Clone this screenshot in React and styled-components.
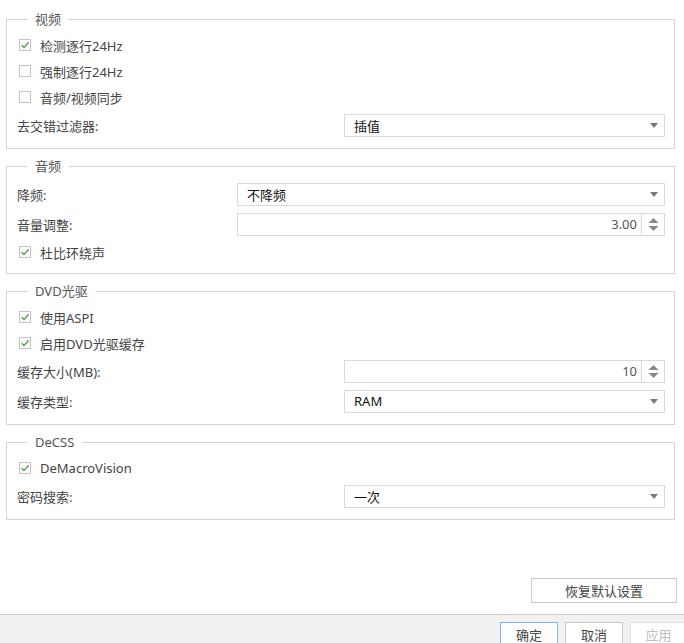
import React from 'react';
import styled, { createGlobalStyle } from 'styled-components';

const GlobalStyle = createGlobalStyle`
  html, body {
    margin: 0;
    padding: 0;
    background: #fff;
  }
  body {
    font-family: "Noto Sans", "Noto Sans CJK SC", sans-serif;
    font-size: 13px;
    color: #444;
  }
  * {
    box-sizing: border-box;
  }
`;

const Window = styled.div`
  width: 684px;
  height: 643px;
  display: flex;
  flex-direction: column;
  overflow: hidden;
`;

const Content = styled.div`
  flex: 1;
  min-height: 0;
  display: flex;
  flex-direction: column;
  gap: 8px;
  padding: 10px 9px 11px 6px;
  background: #fff;
`;

const Group = styled.fieldset`
  margin: 0;
  padding: 4px 9px 8px 10px;
  border: 1px solid #d4d4d4;
  min-width: 0;
`;

const Legend = styled.legend`
  margin-left: 10px;
  padding: 0 8px;
  height: 18px;
  line-height: 18px;
  color: #555;
`;

const CheckRow = styled.label`
  display: flex;
  align-items: center;
  height: 26px;
  padding-left: 2px;
  gap: 9px;
  color: #444;
`;

const Box = styled.span`
  width: 12px;
  height: 12px;
  border: 1px solid #c4c4c4;
  background: #fff;
  display: flex;
  align-items: center;
  justify-content: center;
  flex: none;
`;

const FieldRow = styled.div`
  display: grid;
  grid-template-columns: ${(p) => p.$label}px 1fr;
  align-items: center;
  height: 30px;
`;

const Label = styled.span`
  color: #444;
`;

const Select = styled.div`
  height: 23px;
  border: 1px solid #dadada;
  display: flex;
  align-items: center;
  justify-content: space-between;
  padding: 0 6px 0 9px;
  color: #111;
  background: #fff;
`;

const Spin = styled.div`
  height: 23px;
  border: 1px solid #dadada;
  display: flex;
  align-items: stretch;
  background: #fff;
`;

const SpinValue = styled.span`
  flex: 1;
  text-align: right;
  padding-right: 4px;
  line-height: 21px;
  color: #555;
`;

const SpinButtons = styled.div`
  width: 23px;
  border-left: 1px solid #dadada;
  display: flex;
  align-items: center;
  justify-content: center;
`;

const BottomBar = styled.div`
  margin-top: auto;
  display: flex;
  justify-content: flex-end;
  margin-right: -2px;
`;

const Button = styled.button`
  font: inherit;
  height: 25px;
  padding: 0;
  background: #fff;
  border: 1px solid ${(p) => (p.$primary ? '#7db3e8' : p.$disabled ? '#dedede' : '#c9c9c9')};
  color: ${(p) => (p.$disabled ? '#bdbdbd' : '#444')};
  width: ${(p) => p.$w}px;
  flex: none;
`;

const Footer = styled.div`
  height: 29px;
  flex: none;
  border-top: 1px solid #c9c9c9;
  background: #f1f1f1;
  display: flex;
  justify-content: flex-end;
  align-items: flex-start;
  gap: 7px;
  padding-top: 7px;
  margin-right: -3px;
`;

function Check({ checked, children }) {
  return (
    <CheckRow>
      <Box>
        {checked && (
          <svg width="10" height="10" viewBox="0 0 10 10">
            <path d="M1.5 5.2 L4 7.6 L8.6 2.2" fill="none" stroke="#4f9f4f" strokeWidth="1.4" />
          </svg>
        )}
      </Box>
      {children}
    </CheckRow>
  );
}

function Dropdown({ value }) {
  return (
    <Select>
      <span>{value}</span>
      <svg width="8" height="5" viewBox="0 0 8 5">
        <path d="M0 0 H8 L4 5 Z" fill="#7a7a7a" />
      </svg>
    </Select>
  );
}

function Spinner({ value }) {
  return (
    <Spin>
      <SpinValue>{value}</SpinValue>
      <SpinButtons>
        <svg width="11" height="15" viewBox="0 0 11 15">
          <path d="M0.5 6 L5.5 1 L10.5 6 Z" fill="#888" />
          <path d="M0.5 9 L5.5 14 L10.5 9 Z" fill="#888" />
        </svg>
      </SpinButtons>
    </Spin>
  );
}

export default function App() {
  return (
    <Window>
      <GlobalStyle />
      <Content>
        <Group>
          <Legend>视频</Legend>
          <Check checked>检测逐行24Hz</Check>
          <Check>强制逐行24Hz</Check>
          <Check>音频/视频同步</Check>
          <FieldRow $label={327}>
            <Label>去交错过滤器:</Label>
            <Dropdown value="插值" />
          </FieldRow>
        </Group>

        <Group>
          <Legend>音频</Legend>
          <FieldRow $label={220}>
            <Label>降频:</Label>
            <Dropdown value="不降频" />
          </FieldRow>
          <FieldRow $label={220}>
            <Label>音量调整:</Label>
            <Spinner value="3.00" />
          </FieldRow>
          <Check checked>杜比环绕声</Check>
        </Group>

        <Group>
          <Legend>DVD光驱</Legend>
          <Check checked>使用ASPI</Check>
          <Check checked>启用DVD光驱缓存</Check>
          <FieldRow $label={327}>
            <Label>缓存大小(MB):</Label>
            <Spinner value="10" />
          </FieldRow>
          <FieldRow $label={327}>
            <Label>缓存类型:</Label>
            <Dropdown value="RAM" />
          </FieldRow>
        </Group>

        <Group>
          <Legend>DeCSS</Legend>
          <Check checked>DeMacroVision</Check>
          <FieldRow $label={327}>
            <Label>密码搜索:</Label>
            <Dropdown value="一次" />
          </FieldRow>
        </Group>

        <BottomBar>
          <Button $w={146}>恢复默认设置</Button>
        </BottomBar>
      </Content>
      <Footer>
        <Button $primary $w={58}>确定</Button>
        <Button $w={58}>取消</Button>
        <Button $disabled $w={57}>应用</Button>
      </Footer>
    </Window>
  );
}
